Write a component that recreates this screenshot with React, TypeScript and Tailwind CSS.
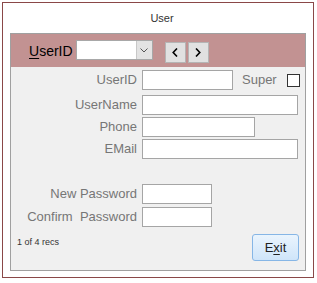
import React from "react";

const font = { fontFamily: '"Liberation Sans", Arial, sans-serif' };

function Label({ children }: { children: React.ReactNode }) {
  return (
    <div className="w-[126px] shrink-0 text-right text-[13px] leading-[20px] text-[#767676]">
      {children}
    </div>
  );
}

function Input({ w }: { w: string }) {
  return <div className={`h-[20px] ${w} border border-[#a5a5a5] bg-white`} />;
}

export default function App() {
  return (
    <div className="w-[317px] h-[283px] bg-white overflow-hidden" style={font}>
      <div className="ml-[2px] mt-[2px] w-[312px] h-[276px] border border-[#8a4848] flex flex-col">
        <div className="h-[30px] flex items-center justify-center pl-[8px] text-[11px] text-[#333]">
          User
        </div>
        <div className="ml-[7px] w-[296px] h-[238px] border border-[#a0a0a0] flex flex-col bg-[#f0f0f0]">
          {/* header band */}
          <div className="h-[33px] bg-[#c29292] flex items-center pl-[18px]">
            <span className="text-[14px] text-black leading-none">
              <span className="underline underline-offset-2">U</span>serID
            </span>
            <div className="ml-[3px] mt-[-1px] flex h-[20px] w-[77px] border border-[#a8a8a8] bg-white">
              <div className="flex-1" />
              <div className="w-[16px] bg-[#e3e3e3] border-l border-[#c8c8c8] flex items-center justify-center">
                <svg width="8" height="5" viewBox="0 0 8 5">
                  <polyline points="0.5,0.5 4,4 7.5,0.5" fill="none" stroke="#555" strokeWidth="1" />
                </svg>
              </div>
            </div>
            <div className="ml-[12px] mt-[3px] flex gap-[2px]">
              <div className="w-[21px] h-[21px] bg-[#e1e1e1] border border-[#b5b5b5] flex items-center justify-center">
                <svg width="6" height="9" viewBox="0 0 6 9">
                  <polyline points="5,0.5 1.2,4.5 5,8.5" fill="none" stroke="#000" strokeWidth="1.6" />
                </svg>
              </div>
              <div className="w-[21px] h-[21px] bg-[#e1e1e1] border border-[#b5b5b5] flex items-center justify-center">
                <svg width="6" height="9" viewBox="0 0 6 9">
                  <polyline points="1,0.5 4.8,4.5 1,8.5" fill="none" stroke="#000" strokeWidth="1.6" />
                </svg>
              </div>
            </div>
          </div>
          {/* body */}
          <div className="flex-1 flex flex-col">
            <div className="mt-[3px] flex items-center gap-[5px]">
              <Label>UserID</Label>
              <Input w="w-[91px]" />
              <span className="ml-[4px] text-[13px] text-[#767676] leading-[20px]">Super</span>
              <div className="ml-[5px] w-[13px] h-[13px] border border-[#333] bg-white" />
            </div>
            <div className="mt-[5px] flex items-center gap-[5px]">
              <Label>UserName</Label>
              <Input w="w-[156px]" />
            </div>
            <div className="mt-[2px] flex items-center gap-[5px]">
              <Label>Phone</Label>
              <Input w="w-[113px]" />
            </div>
            <div className="mt-[2px] flex items-center gap-[5px]">
              <Label>EMail</Label>
              <Input w="w-[156px]" />
            </div>
            <div className="mt-[25px] flex items-center gap-[5px]">
              <Label>New Password</Label>
              <Input w="w-[70px]" />
            </div>
            <div className="mt-[3px] flex items-center gap-[5px]">
              <Label>Confirm&nbsp; Password</Label>
              <Input w="w-[70px]" />
            </div>
            <div className="mt-[7px] flex items-start justify-between pl-[6px] pr-[6px]">
              <span className="mt-[3px] text-[9px] text-[#333] leading-[10px]">1 of 4 recs</span>
              <div className="w-[47px] h-[27px] rounded-[3px] border border-[#86b6e6] bg-gradient-to-b from-[#eaf4fd] to-[#cfe5fa] flex items-center justify-center text-[13px] text-[#222]">
                E<span className="underline underline-offset-2">x</span>it
              </div>
            </div>
          </div>
        </div>
      </div>
    </div>
  );
}
